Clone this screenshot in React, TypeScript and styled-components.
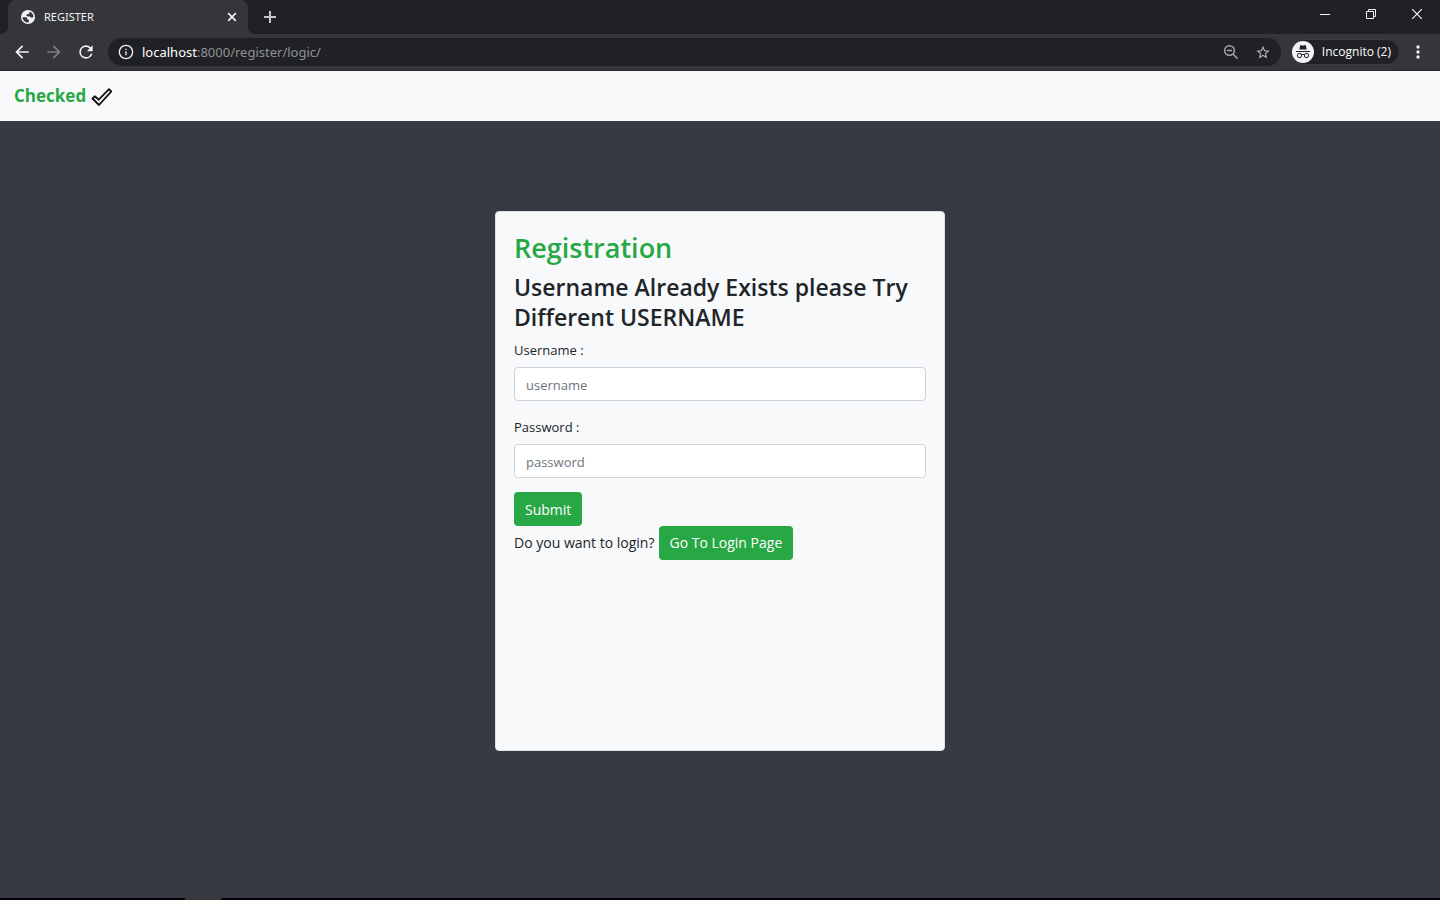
import React from "react";
import styled, { createGlobalStyle } from "styled-components";

const GlobalStyle = createGlobalStyle`
  *, *::before, *::after { box-sizing: border-box; }
  body {
    margin: 0;
    background: #363a42;
    color: #212529;
    font-family: "Open Sans", "Noto Sans", sans-serif;
    font-size: 14px;
    line-height: 22px;
  }
  button, input { font: inherit; }
`;

const Screen = styled.div`
  display: flex;
  flex-direction: column;
  min-height: 100vh;
`;

const TabStrip = styled.header`
  display: flex;
  align-items: stretch;
  height: 34px;
  padding-left: 8px;
  background: #202124;
`;

const Tab = styled.div`
  position: relative;
  display: flex;
  align-items: center;
  gap: 8px;
  width: 240px;
  padding: 0 8px 0 12px;
  border-radius: 8px 8px 0 0;
  background: #35363a;
  color: #f1f3f4;

  &::before, &::after {
    content: "";
    position: absolute;
    bottom: 0;
    width: 8px;
    height: 8px;
  }
  &::before {
    right: 100%;
    background: radial-gradient(circle at 0 0, transparent 8px, #35363a 8px);
  }
  &::after {
    left: 100%;
    background: radial-gradient(circle at 100% 0, transparent 8px, #35363a 8px);
  }
`;

const TabTitle = styled.span`
  flex: 1;
  font-family: "Noto Sans", sans-serif;
  font-size: 11px;
`;

const IconButton = styled.button<{ $width?: number; $color?: string }>`
  display: flex;
  align-items: center;
  justify-content: center;
  width: ${({ $width = 16 }) => $width}px;
  padding: 0;
  border: 0;
  background: none;
  color: ${({ $color = "#f1f3f4" }) => $color};
`;

const WindowControls = styled.div`
  display: flex;
  height: 28px;
  margin-left: auto;
`;

const Toolbar = styled.nav`
  display: flex;
  align-items: center;
  height: 37px;
  padding: 0 4px 0 6px;
  border-bottom: 1px solid #28292c;
  background: #35363a;
`;

const AddressBar = styled.div`
  display: flex;
  flex: 1;
  align-items: center;
  gap: 8px;
  height: 28px;
  margin: 0 10px 0 6px;
  padding: 0 10px;
  border-radius: 14px;
  background: #202124;
  color: #f1f3f4;
`;

const Address = styled.span`
  flex: 1;
  color: #8f9296;
  font-family: "Noto Sans", sans-serif;
  font-size: 13px;
`;

const Host = styled.span`
  color: #ffffff;
`;

const IncognitoButton = styled.button`
  display: flex;
  align-items: center;
  gap: 8px;
  height: 26px;
  padding: 0 8px 0 0;
  border: 1px solid #3c3d41;
  border-radius: 13px;
  background: #202124;
  color: #ffffff;
  font-size: 12px;
`;

const SiteBar = styled.nav`
  display: flex;
  align-items: center;
  height: 50px;
  padding: 0 14px;
  background: #f8f9fa;
`;

const Brand = styled.a`
  display: flex;
  align-items: center;
  gap: 5px;
  color: #28a745;
  font-size: 17px;
  font-weight: 700;
  text-decoration: none;
`;

const Main = styled.main`
  flex: 1;
  padding: 90px 16px;
`;

const Card = styled.section`
  max-width: 450px;
  min-height: 540px;
  margin: 0 auto;
  padding: 19px 18px;
  border: 1px solid #dddfe2;
  border-radius: 4px;
  background: #f8f9fa;
`;

const Title = styled.h1`
  margin: 0 0 7px;
  color: #28a745;
  font-size: 27px;
  font-weight: 600;
  line-height: 34px;
`;

const Message = styled.h2`
  margin: 0 0 6px;
  font-size: 23px;
  font-weight: 600;
  line-height: 30px;
`;

const Field = styled.div`
  display: flex;
  flex-direction: column;
  gap: 5px;
  margin-bottom: 14px;
  font-size: 13px;
  line-height: 24px;
`;

const TextInput = styled.input`
  width: 100%;
  height: 34px;
  padding: 1px 11px 0;
  border: 1px solid #ced4da;
  border-radius: 4px;
  background: #ffffff;
  color: #495057;

  &::placeholder {
    color: #6c757d;
    opacity: 1;
  }
`;

const SubmitButton = styled.button`
  display: block;
  height: 34px;
  padding: 2px 11px 0;
  border: 0;
  border-radius: 4px;
  background: #28a745;
  color: #ffffff;
`;

const LoginRow = styled.div`
  display: flex;
  align-items: center;
  gap: 4px;
`;

const LoginLink = styled.a`
  height: 34px;
  padding: 0 11px;
  border-radius: 4px;
  background: #28a745;
  color: #ffffff;
  line-height: 34px;
  text-decoration: none;
`;

const Taskbar = styled.footer`
  display: flex;
  height: 2px;
  padding-left: 185px;
  background: #050303;
`;

const TaskbarItem = styled.span`
  width: 36px;
  background: #3b3838;
`;

const GlobeIcon = () => (
  <svg width="16" height="16" viewBox="0 0 16 16" aria-hidden="true">
    <circle cx="8" cy="8" r="7" fill="#f1f3f4" />
    <path d="M2.500 8.200h3.200c1 0 1.600.7 1.600 1.600v.7h1.500v2.700c-.3.200-.8.200-1.300.200-2.800-.3-4.900-2.400-5-5.200zM9.300 2.700c2.300.5 4 2.400 4.200 4.800-.5.900-1.300 1.400-2.200 1.200-.7-.1-1-.6-1.100-1.200H7.800c-.8 0-1.300-.5-1.300-1.200 0-.8.600-1.300 1.400-1.300h1.400z" fill="#35363a" />
  </svg>
);

const MaterialIcon = ({ d, size = 20 }: { d: string; size?: number }) => (
  <svg width={size} height={size} viewBox="0 0 24 24" fill="currentColor" aria-hidden="true">
    <path d={d} />
  </svg>
);

const CloseIcon = () => (
  <svg width="16" height="16" viewBox="0 0 16 16" stroke="currentColor" strokeWidth="1.700" aria-hidden="true">
    <path d="M4.200 4.200l7.600 7.600M11.800 4.200l-7.600 7.600" />
  </svg>
);

const PlusIcon = () => (
  <svg width="14" height="14" viewBox="0 0 14 14" stroke="#c5c7ca" strokeWidth="2" aria-hidden="true">
    <path d="M7 1v12M1 7h12" />
  </svg>
);

const MinimizeIcon = () => (
  <svg width="10" height="10" viewBox="0 0 10 10" stroke="currentColor" aria-hidden="true">
    <path d="M0 5.500h10" />
  </svg>
);

const RestoreIcon = () => (
  <svg width="10" height="10" viewBox="0 0 10 10" fill="none" stroke="currentColor" aria-hidden="true">
    <path d="M.5 2.500h7v7h-7zM2.500 2.500v-2h7v7h-2" />
  </svg>
);

const WindowCloseIcon = () => (
  <svg width="10" height="10" viewBox="0 0 10 10" stroke="currentColor" strokeWidth="1.200" aria-hidden="true">
    <path d="M0 0l10 10M10 0L0 10" />
  </svg>
);

const ZoomOutIcon = () => (
  <svg width="16" height="16" viewBox="0 0 16 16" fill="none" stroke="currentColor" strokeWidth="1.500" aria-hidden="true">
    <circle cx="6.500" cy="6.500" r="4.800" />
    <path d="M10 10l4.500 4.500M4 6.500h5" />
  </svg>
);

const IncognitoIcon = () => (
  <svg width="22" height="22" viewBox="0 0 22 22" fill="none" aria-hidden="true">
    <circle cx="11" cy="11" r="11" fill="#f1f3f4" />
    <path d="M7.300 8.500l1-4.200h1.500l1.200.5 1.200-.5h1.500l1 4.200z" fill="#202124" />
    <path d="M4 10.500h14" stroke="#202124" />
    <rect x="5.500" y="12.500" width="4" height="4" rx="1.500" stroke="#202124" />
    <rect x="12.500" y="12.500" width="4" height="4" rx="1.500" stroke="#202124" />
    <path d="M9.500 13.500h3" stroke="#202124" />
  </svg>
);

const CheckIcon = () => (
  <svg width="22" height="22" viewBox="0 0 22 22" fill="none" stroke="#111" strokeWidth="1.800" strokeLinejoin="round" aria-hidden="true">
    <path d="M1.500 13.500l2.300-2.200 4 3.400L18 4.200l2.300 2.100L8 20z" />
  </svg>
);

export default function App() {
  return (
    <>
      <GlobalStyle />
      <Screen>
        <TabStrip>
          <Tab>
            <GlobeIcon />
            <TabTitle>REGISTER</TabTitle>
            <IconButton aria-label="Close tab"><CloseIcon /></IconButton>
          </Tab>
          <IconButton $width={44} aria-label="New tab"><PlusIcon /></IconButton>
          <WindowControls>
            <IconButton $width={46} aria-label="Minimize"><MinimizeIcon /></IconButton>
            <IconButton $width={46} aria-label="Restore"><RestoreIcon /></IconButton>
            <IconButton $width={46} aria-label="Close window"><WindowCloseIcon /></IconButton>
          </WindowControls>
        </TabStrip>

        <Toolbar aria-label="Browser">
          <IconButton $width={32} aria-label="Back">
            <MaterialIcon d="M20 11H7.830l5.590-5.590L12 4l-8 8 8 8 1.410-1.410L7.830 13H20v-2z" />
          </IconButton>
          <IconButton $width={32} $color="#7d7e81" aria-label="Forward" disabled>
            <MaterialIcon d="M12 4l-1.410 1.410L16.170 11H4v2h12.170l-5.580 5.590L12 20l8-8z" />
          </IconButton>
          <IconButton $width={32} aria-label="Reload">
            <MaterialIcon d="M17.650 6.350A7.960 7.960 0 0 0 12 4a8 8 0 1 0 7.730 10h-2.080A6 6 0 1 1 12 6c1.660 0 3.140.69 4.220 1.780L13 11h7V4l-2.350 2.350z" />
          </IconButton>
          <AddressBar>
            <MaterialIcon size={16} d="M11 17h2v-6h-2v6zm1-16a11 11 0 1 0 0 22 11 11 0 0 0 0-22zm0 20a9 9 0 1 1 0-18 9 9 0 0 1 0 18zM11 9h2V7h-2v2z" />
            <Address><Host>localhost</Host>:8000/register/logic/</Address>
            <IconButton $width={32} $color="#a5a8ac" aria-label="Zoom"><ZoomOutIcon /></IconButton>
            <IconButton $color="#b8babd" aria-label="Bookmark this page">
              <MaterialIcon size={17} d="M22 9.240l-7.190-.62L12 2 9.190 8.630 2 9.240l5.460 4.730L5.820 21 12 17.270 18.180 21l-1.630-7.030L22 9.240zM12 15.400l-3.760 2.270 1-4.280-3.320-2.880 4.380-.38L12 6.100l1.710 4.040 4.380.38-3.320 2.880 1 4.280L12 15.400z" />
            </IconButton>
          </AddressBar>
          <IncognitoButton><IncognitoIcon />Incognito (2)</IncognitoButton>
          <IconButton $width={36} aria-label="Menu">
            <MaterialIcon d="M12 8a2 2 0 1 0 0-4 2 2 0 0 0 0 4zm0 2a2 2 0 1 0 0 4 2 2 0 0 0 0-4zm0 6a2 2 0 1 0 0 4 2 2 0 0 0 0-4z" />
          </IconButton>
        </Toolbar>

        <SiteBar aria-label="Site">
          <Brand href="#">Checked <CheckIcon /></Brand>
        </SiteBar>

        <Main>
          <Card>
            <Title>Registration</Title>
            <Message>Username Already Exists please Try Different USERNAME</Message>
            <form onSubmit={(event) => event.preventDefault()}>
              <Field>
                <label htmlFor="username">Username :</label>
                <TextInput id="username" type="text" placeholder="username" />
              </Field>
              <Field>
                <label htmlFor="password">Password :</label>
                <TextInput id="password" type="password" placeholder="password" />
              </Field>
              <SubmitButton type="submit">Submit</SubmitButton>
            </form>
            <LoginRow>
              <span>Do you want to login?</span>
              <LoginLink href="#login">Go To Login Page</LoginLink>
            </LoginRow>
          </Card>
        </Main>
        <Taskbar><TaskbarItem /></Taskbar>
      </Screen>
    </>
  );
}
